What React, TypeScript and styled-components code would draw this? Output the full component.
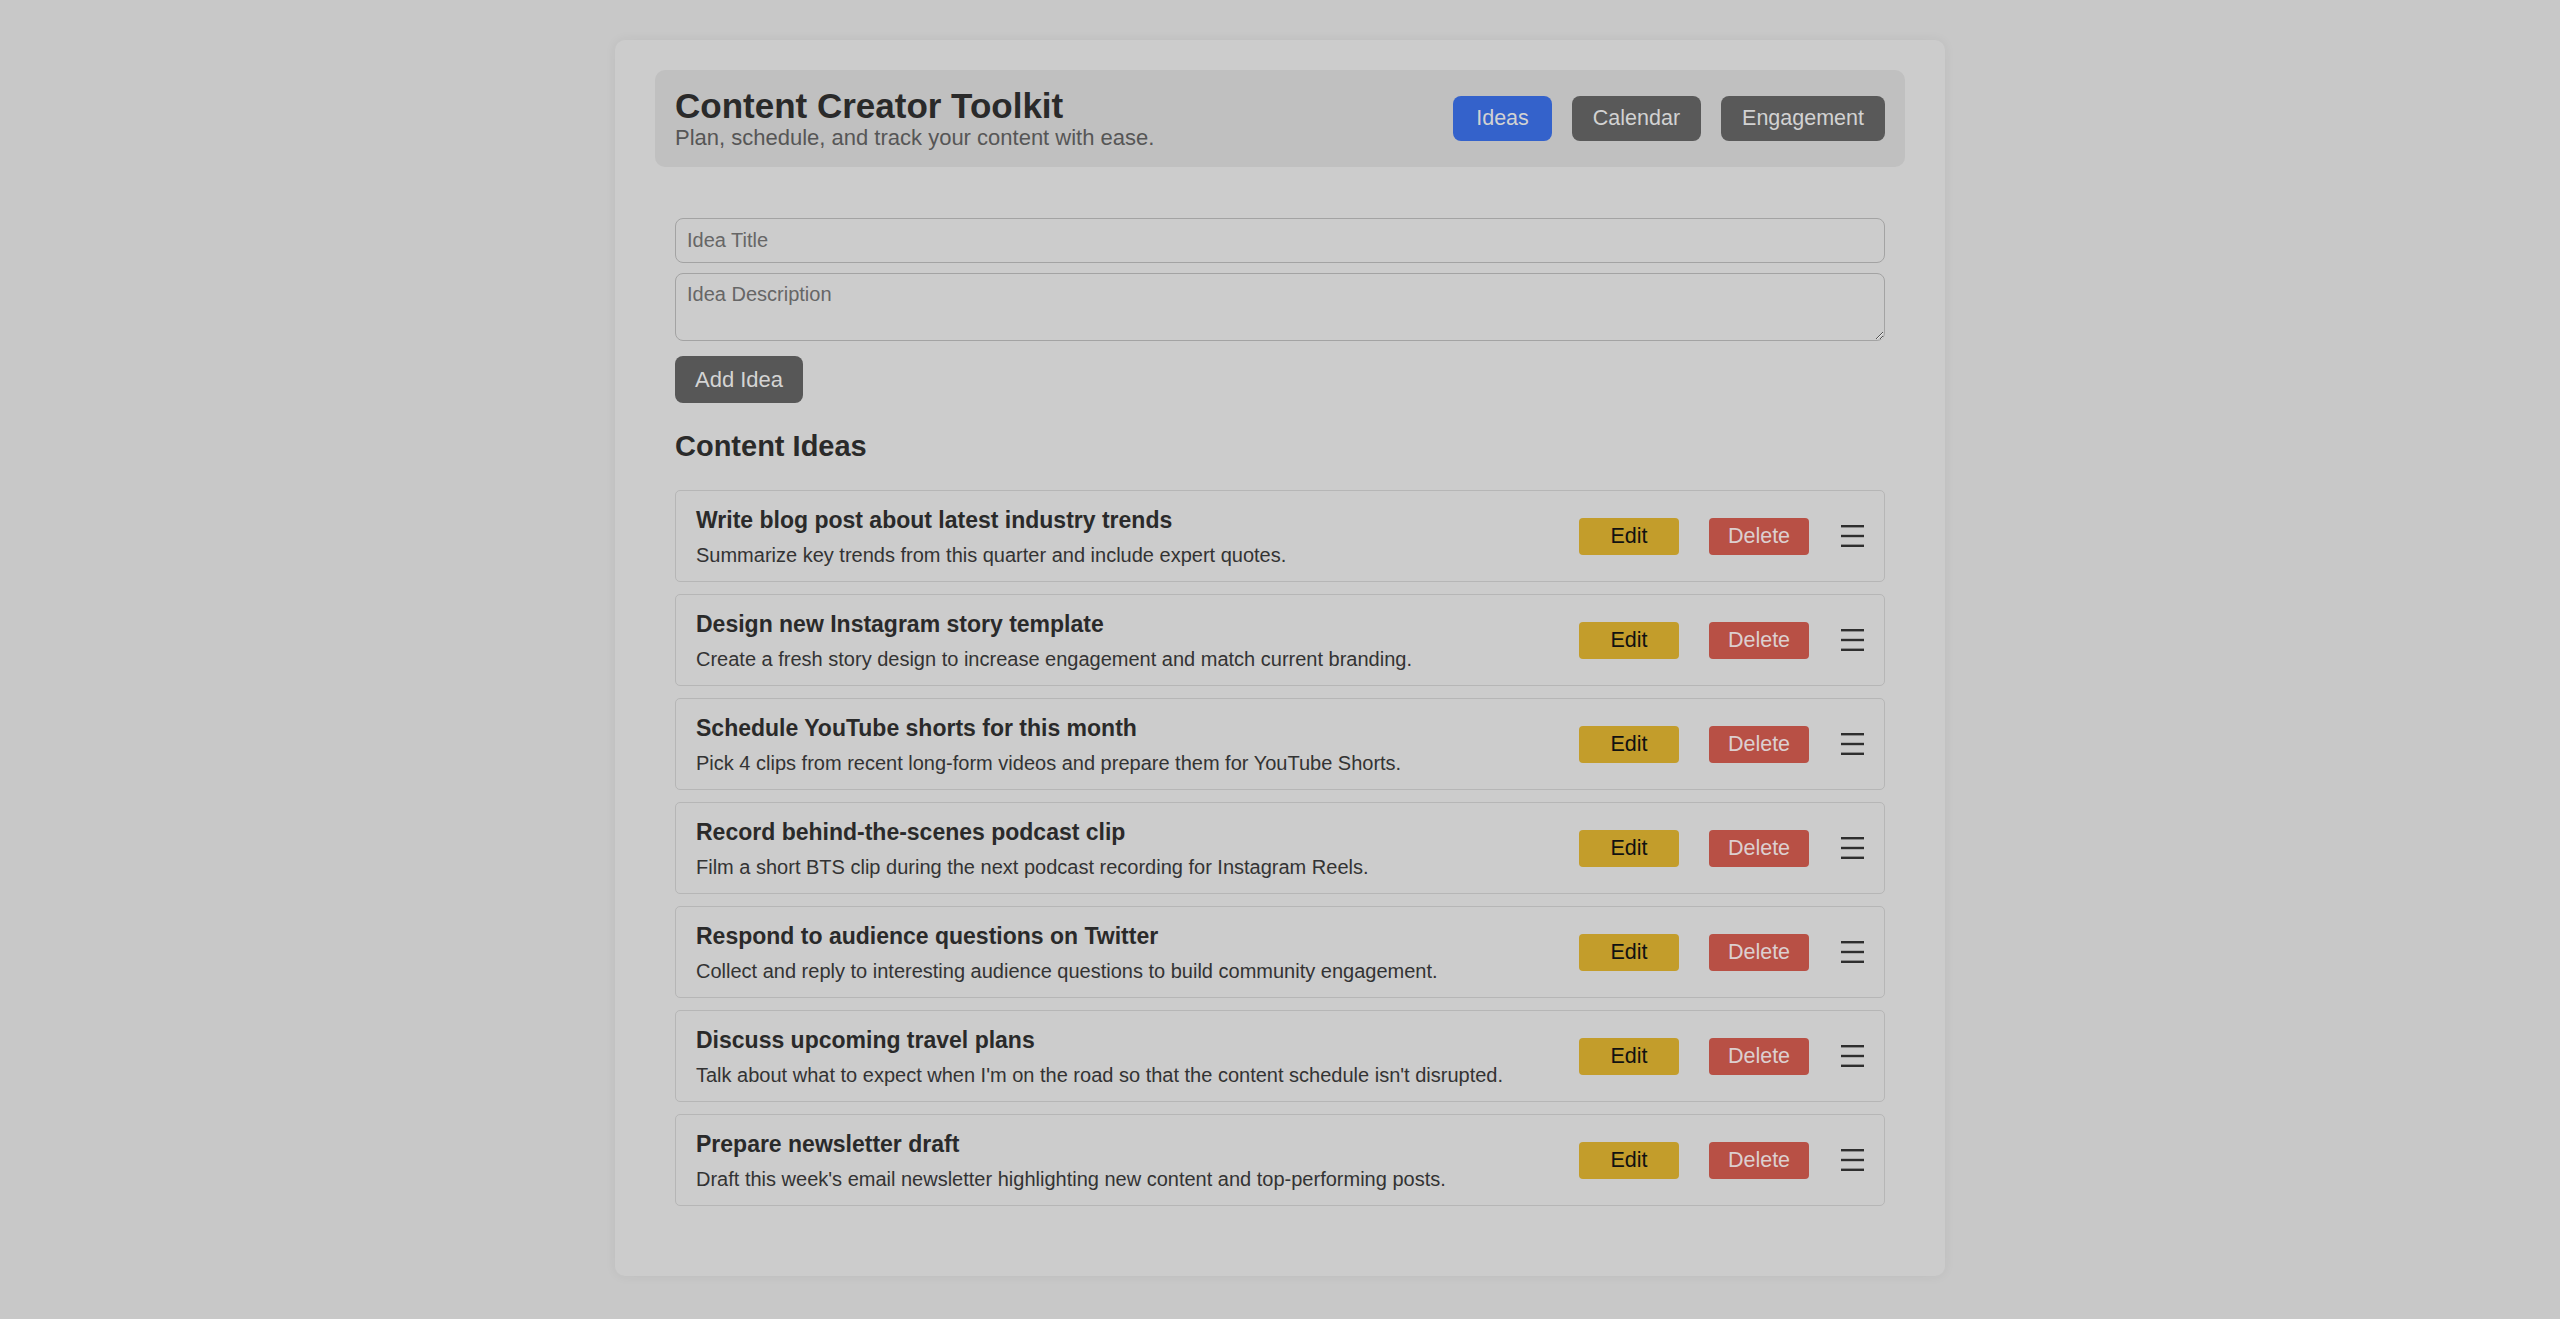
import React, { useState, FormEvent } from 'react';
import styled, { createGlobalStyle } from 'styled-components';

const GlobalStyle = createGlobalStyle`
    html, body {
        margin: 0;
        padding: 0;
        background: #c8c8c8;
        font-family: "Liberation Sans", Arial, sans-serif;
    }
    * {
        box-sizing: border-box;
    }
`;

const Page = styled.div`
    padding: 40px 0 40px;
`;

const Container = styled.div`
    width: 1330px;
    margin: 0 auto;
    padding: 30px 40px 50px;
    background: #cccccc;
    border-radius: 10px;
    box-shadow: 0 0 12px rgba(0, 0, 0, 0.06);
`;

const Header = styled.header`
    display: flex;
    align-items: center;
    justify-content: space-between;
    padding: 16px 20px;
    background: #c0c0c0;
    border-radius: 10px;
    margin-bottom: 31px;
`;

const Title = styled.h1`
    margin: 0;
    font-size: 35px;
    font-weight: bold;
    line-height: 39px;
    color: #2a2a2a;
`;

const Subtitle = styled.p`
    margin: 0;
    font-size: 22px;
    line-height: 26px;
    color: #565656;
`;

const Tabs = styled.nav`
    display: flex;
    gap: 20px;
`;

const Tab = styled.button<{ $active?: boolean }>`
    font-family: inherit;
    font-size: 21.5px;
    line-height: 25px;
    padding: 10px ${(p) => (p.$active ? '23px' : '21px')};
    border: none;
    border-radius: 8px;
    cursor: pointer;
    background: ${(p) => (p.$active ? '#3462cb' : '#595959')};
    color: #d2d2d2;
`;

const Section = styled.section`
    padding: 20px;
`;

const Form = styled.form`
    display: flex;
    flex-direction: column;
    align-items: flex-start;
    gap: 10px;
`;

const TitleInput = styled.input`
    width: 100%;
    height: 45px;
    padding: 10px 11px;
    font-family: inherit;
    font-size: 20px;
    color: #333;
    background: #cccccc;
    border: 1px solid #a3a3a3;
    border-radius: 8px;
    outline: none;

    &::placeholder {
        color: #666;
    }
`;

const DescInput = styled.textarea`
    width: 100%;
    height: 68px;
    padding: 9px 11px;
    font-family: inherit;
    font-size: 20px;
    line-height: 23px;
    color: #333;
    background: #cccccc;
    border: 1px solid #a3a3a3;
    border-radius: 8px;
    outline: none;
    display: block;

    &::placeholder {
        color: #666;
    }
`;

const AddButton = styled.button`
    margin-top: 5px;
    font-family: inherit;
    font-size: 22px;
    line-height: 25px;
    padding: 11px 20px;
    background: #575757;
    color: #d4d4d4;
    border: none;
    border-radius: 8px;
    cursor: pointer;
`;

const ListTitle = styled.h2`
    margin: 27px 0 27px;
    font-size: 29px;
    line-height: 33px;
    font-weight: bold;
    color: #2a2a2a;
`;

const IdeaList = styled.ul`
    list-style: none;
    margin: 0;
    padding: 0;
    display: flex;
    flex-direction: column;
    gap: 12px;
`;

const IdeaCard = styled.li`
    display: flex;
    align-items: center;
    justify-content: space-between;
    padding: 16px 20px 14px;
    border: 1px solid #b6b6b6;
    border-radius: 5px;
    background: #cccccc;
`;

const IdeaText = styled.div`
    display: flex;
    flex-direction: column;
    gap: 11px;
`;

const IdeaTitle = styled.strong`
    font-size: 23px;
    line-height: 26px;
    color: #2a2a2a;
`;

const IdeaDesc = styled.span`
    font-size: 20px;
    line-height: 23px;
    color: #333;
`;

const Actions = styled.div`
    display: flex;
    align-items: center;
    gap: 30px;
    margin-top: -2px;
`;

const ActionButton = styled.button<{ $kind: 'edit' | 'delete' }>`
    width: 100px;
    height: 37px;
    font-family: inherit;
    font-size: 21.5px;
    border: none;
    border-radius: 4px;
    cursor: pointer;
    background: ${(p) => (p.$kind === 'edit' ? '#c39d2b' : '#b85045')};
    color: ${(p) => (p.$kind === 'edit' ? '#111' : '#dccfcf')};
`;

const Handle = styled.span`
    display: flex;
    margin-left: 2px;
    cursor: grab;
`;

const MenuIcon = () => (
    <svg width="23" height="22" viewBox="0 0 23 22">
        <rect x="0" y="0" width="23" height="2.4" fill="#2e2e2e" />
        <rect x="0" y="9.8" width="23" height="2.4" fill="#2e2e2e" />
        <rect x="0" y="19.6" width="23" height="2.4" fill="#2e2e2e" />
    </svg>
);

interface Idea {
    id: number;
    title: string;
    description: string;
}

const initialIdeas: Idea[] = [
    { id: 1, title: 'Write blog post about latest industry trends', description: 'Summarize key trends from this quarter and include expert quotes.' },
    { id: 2, title: 'Design new Instagram story template', description: 'Create a fresh story design to increase engagement and match current branding.' },
    { id: 3, title: 'Schedule YouTube shorts for this month', description: 'Pick 4 clips from recent long-form videos and prepare them for YouTube Shorts.' },
    { id: 4, title: 'Record behind-the-scenes podcast clip', description: 'Film a short BTS clip during the next podcast recording for Instagram Reels.' },
    { id: 5, title: 'Respond to audience questions on Twitter', description: 'Collect and reply to interesting audience questions to build community engagement.' },
    { id: 6, title: 'Discuss upcoming travel plans', description: "Talk about what to expect when I'm on the road so that the content schedule isn't disrupted." },
    { id: 7, title: 'Prepare newsletter draft', description: "Draft this week's email newsletter highlighting new content and top-performing posts." },
];

const tabs = ['Ideas', 'Calendar', 'Engagement'];

const App: React.FC = () => {
    const [activeTab, setActiveTab] = useState('Ideas');
    const [ideas, setIdeas] = useState<Idea[]>(initialIdeas);
    const [title, setTitle] = useState('');
    const [description, setDescription] = useState('');

    const handleSubmit = (e: FormEvent<HTMLFormElement>) => {
        e.preventDefault();
        if (!title.trim()) return;
        setIdeas([...ideas, { id: Date.now(), title, description }]);
        setTitle('');
        setDescription('');
    };

    const removeIdea = (id: number) => setIdeas(ideas.filter((i) => i.id !== id));

    return (
        <Page>
            <GlobalStyle />
            <Container>
                <Header>
                    <div>
                        <Title>Content Creator Toolkit</Title>
                        <Subtitle>Plan, schedule, and track your content with ease.</Subtitle>
                    </div>
                    <Tabs>
                        {tabs.map((t) => (
                            <Tab key={t} $active={activeTab === t} onClick={() => setActiveTab(t)}>
                                {t}
                            </Tab>
                        ))}
                    </Tabs>
                </Header>
                <Section>
                    <Form onSubmit={handleSubmit}>
                        <TitleInput
                            placeholder="Idea Title"
                            value={title}
                            onChange={(e) => setTitle(e.target.value)}
                        />
                        <DescInput
                            placeholder="Idea Description"
                            value={description}
                            onChange={(e) => setDescription(e.target.value)}
                        />
                        <AddButton type="submit">Add Idea</AddButton>
                    </Form>
                    <ListTitle>Content Ideas</ListTitle>
                    <IdeaList>
                        {ideas.map((idea) => (
                            <IdeaCard key={idea.id}>
                                <IdeaText>
                                    <IdeaTitle>{idea.title}</IdeaTitle>
                                    <IdeaDesc>{idea.description}</IdeaDesc>
                                </IdeaText>
                                <Actions>
                                    <ActionButton $kind="edit">Edit</ActionButton>
                                    <ActionButton $kind="delete" onClick={() => removeIdea(idea.id)}>
                                        Delete
                                    </ActionButton>
                                    <Handle>
                                        <MenuIcon />
                                    </Handle>
                                </Actions>
                            </IdeaCard>
                        ))}
                    </IdeaList>
                </Section>
            </Container>
        </Page>
    );
};

export default App;
